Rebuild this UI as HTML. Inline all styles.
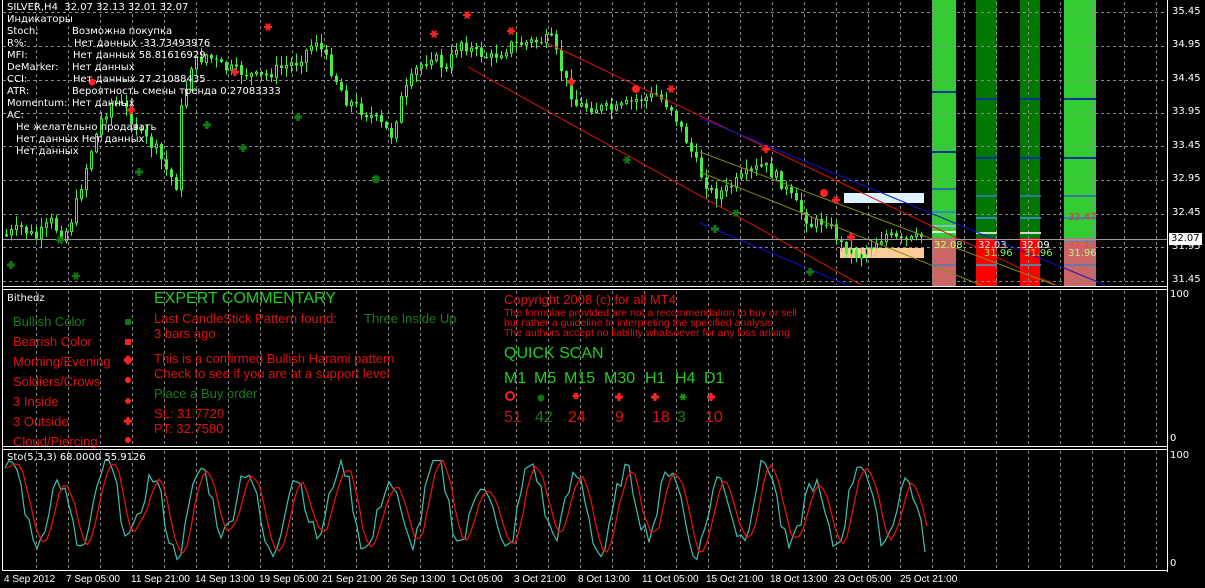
<!DOCTYPE html>
<html><head><meta charset="utf-8">
<style>
html,body{margin:0;padding:0;background:#000;}
body{width:1205px;height:588px;overflow:hidden;position:relative;font-family:"DejaVu Sans","Liberation Sans",sans-serif;}
svg{position:absolute;left:0;top:0;}
.t{position:absolute;white-space:nowrap;font-size:10px;color:#fff;line-height:12px;font-family:"DejaVu Sans","Liberation Sans",sans-serif;}
.x{position:absolute;white-space:nowrap;font-size:10px;color:#fff;line-height:12px;font-family:"Liberation Sans",sans-serif;}
.a{font-family:"Liberation Sans",sans-serif;white-space:nowrap;position:absolute;}
</style></head><body>
<svg id="s" width="1205" height="588" viewBox="0 0 1205 588" xmlns="http://www.w3.org/2000/svg"></svg>

<div class="t" style="left:7px;top:2px">SILVER,H4&nbsp; 32.07 32.13 32.01 32.07</div>
<div class="t" style="left:7px;top:14px">Индикаторы</div>
<div class="t" style="left:7px;top:26px">Stoch:</div><div class="t" style="left:72px;top:26px">Возможна покупка</div>
<div class="t" style="left:7px;top:38px">R%:</div><div class="t" style="left:74px;top:38px">Нет данных -33.73493976</div>
<div class="t" style="left:7px;top:50px">MFI:</div><div class="t" style="left:73px;top:50px">Нет данных 58.81616929</div>
<div class="t" style="left:7px;top:62px">DeMarker:</div><div class="t" style="left:72px;top:62px">Нет данных</div>
<div class="t" style="left:7px;top:74px">CCI:</div><div class="t" style="left:73px;top:74px">Нет данных 27.21088435</div>
<div class="t" style="left:7px;top:86px">ATR:</div><div class="t" style="left:72px;top:86px">Вероятность смены тренда 0.27083333</div>
<div class="t" style="left:7px;top:98px">Momentum:</div><div class="t" style="left:72px;top:98px">Нет данных</div>
<div class="t" style="left:7px;top:110px">AC:</div>
<div class="t" style="left:16px;top:122px">Не желательно продавать</div>
<div class="t" style="left:16px;top:134px">Нет данных Нет данных</div>
<div class="t" style="left:16px;top:146px">Нет данных</div>

<div class="t" style="left:7px;top:293px">Bithedz</div>
<div class="a" style="left:13px;top:314px;font-size:13px;color:#1e7a1e">Bullish Color</div>
<div class="a" style="left:13px;top:334px;font-size:13px;color:#e01010">Bearish Color</div>
<div class="a" style="left:13px;top:354px;font-size:13px;color:#e01010">Morning/Evening</div>
<div class="a" style="left:13px;top:374px;font-size:13px;color:#e01010">Soldiers/Crows</div>
<div class="a" style="left:13px;top:394px;font-size:13px;color:#e01010">3 Inside</div>
<div class="a" style="left:13px;top:414px;font-size:13px;color:#e01010">3 Outside</div>
<div class="a" style="left:13px;top:434px;font-size:13px;color:#e01010">Cloud/Piercing</div>

<div class="a" style="left:154px;top:290px;font-size:16px;color:#22cc22">EXPERT COMMENTARY</div>
<div class="a" style="left:154px;top:311px;font-size:13px;color:#e01010">Last CandleStick Pattern found:</div>
<div class="a" style="left:364px;top:311px;font-size:13px;color:#1e7a1e">Three Inside Up</div>
<div class="a" style="left:154px;top:326px;font-size:13px;color:#e01010">3 bars ago</div>
<div class="a" style="left:154px;top:351px;font-size:13px;color:#e01010">This is a confirmed Bullish Harami pattern</div>
<div class="a" style="left:154px;top:366px;font-size:13px;color:#e01010">Check to see if you are at a support level</div>
<div class="a" style="left:154px;top:386px;font-size:13px;color:#1e7a1e">Place a Buy order</div>
<div class="a" style="left:154px;top:406px;font-size:13px;color:#e01010">SL: 31.7720</div>
<div class="a" style="left:154px;top:421px;font-size:13px;color:#e01010">PT: 32.7580</div>

<div class="a" style="left:504px;top:292px;font-size:13px;color:#e01010">Copyright 2008 (c) for all MT4</div>
<div class="a" style="left:504px;top:308px;font-size:10.5px;line-height:10px;color:#e01010">The formulae provided are not a recommendation to buy or sell<br>but rather a guideline to interpreting the specified analysis.<br>The authors accept no liability whatsoever for any loss arising</div>
<div class="a" style="left:504px;top:345px;font-size:16px;color:#22cc22">QUICK SCAN</div>
<div class="a" style="left:504px;top:370px;font-size:16px;color:#22cc22">M1</div>
<div class="a" style="left:534px;top:370px;font-size:16px;color:#22cc22">M5</div>
<div class="a" style="left:564px;top:370px;font-size:16px;color:#22cc22">M15</div>
<div class="a" style="left:604px;top:370px;font-size:16px;color:#22cc22">M30</div>
<div class="a" style="left:645px;top:370px;font-size:16px;color:#22cc22">H1</div>
<div class="a" style="left:675px;top:370px;font-size:16px;color:#22cc22">H4</div>
<div class="a" style="left:704px;top:370px;font-size:16px;color:#22cc22">D1</div>
<div class="a" style="left:504px;top:409px;font-size:16px;color:#b01818">51</div>
<div class="a" style="left:535px;top:409px;font-size:16px;color:#1e7a1e">42</div>
<div class="a" style="left:568px;top:409px;font-size:16px;color:#e01010">24</div>
<div class="a" style="left:615px;top:409px;font-size:16px;color:#e01010">9</div>
<div class="a" style="left:652px;top:409px;font-size:16px;color:#e01010">18</div>
<div class="a" style="left:677px;top:409px;font-size:16px;color:#1e7a1e">3</div>
<div class="a" style="left:705px;top:409px;font-size:16px;color:#e01010">10</div>

<div class="t" style="left:7px;top:452px">Sto(5,3,3) 68.0000 55.9126</div>

<div class="t" style="left:1172px;top:6px">35.45</div>
<div class="t" style="left:1172px;top:39px">34.95</div>
<div class="t" style="left:1172px;top:73px">34.45</div>
<div class="t" style="left:1172px;top:106px">33.95</div>
<div class="t" style="left:1172px;top:140px">33.45</div>
<div class="t" style="left:1172px;top:173px">32.95</div>
<div class="t" style="left:1172px;top:207px">32.45</div>
<div class="t" style="left:1172px;top:241px">31.95</div>
<div class="t" style="left:1172px;top:274px">31.45</div>
<div class="t" style="left:1169px;top:233px;background:#fff;color:#000;padding:0 2px">32.07</div>
<div class="t" style="left:1170px;top:289px">100</div>
<div class="t" style="left:1170px;top:433px">0</div>
<div class="t" style="left:1170px;top:450px">100</div>
<div class="t" style="left:1170px;top:558px">0</div>

<div class="x" style="left:4px;top:574px">4 Sep 2012</div>
<div class="x" style="left:66px;top:574px">7 Sep 05:00</div>
<div class="x" style="left:131px;top:574px">11 Sep 21:00</div>
<div class="x" style="left:195px;top:574px">14 Sep 13:00</div>
<div class="x" style="left:259px;top:574px">19 Sep 05:00</div>
<div class="x" style="left:322px;top:574px">21 Sep 21:00</div>
<div class="x" style="left:386px;top:574px">26 Sep 13:00</div>
<div class="x" style="left:451px;top:574px">1 Oct 05:00</div>
<div class="x" style="left:514px;top:574px">3 Oct 21:00</div>
<div class="x" style="left:578px;top:574px">8 Oct 13:00</div>
<div class="x" style="left:642px;top:574px">11 Oct 05:00</div>
<div class="x" style="left:706px;top:574px">15 Oct 21:00</div>
<div class="x" style="left:770px;top:574px">18 Oct 13:00</div>
<div class="x" style="left:834px;top:574px">23 Oct 05:00</div>
<div class="x" style="left:900px;top:574px">25 Oct 21:00</div>

<script>
(function(){
var s=document.getElementById('s');var h='<defs><clipPath id="cm"><rect x="3" y="0" width="1164" height="285"/></clipPath></defs>';
function L(x1,y1,x2,y2,c,w,d){h+='<line x1="'+x1+'" y1="'+y1+'" x2="'+x2+'" y2="'+y2+'" stroke="'+c+'" stroke-width="'+(w||1)+'"'+(d?' stroke-dasharray="'+d+'"':'')+'/>';}
function R(x,y,w,hh,c){h+='<rect x="'+x+'" y="'+y+'" width="'+w+'" height="'+hh+'" fill="'+c+'"/>';}
R(932,0,24,238,'#33cc33');R(932,238,24,49,'#cc6666');
R(976,0,21,238,'#007700');R(976,238,21,49,'#ff0000');
R(1020,0,20,238,'#007700');R(1020,238,20,49,'#ff0000');
R(1064,0,32,238,'#33cc33');R(1064,238,32,49,'#cc6666');
var gc='#8a8a8a';
for(var x=36;x<1167;x+=32){L(x+.5,2,x+.5,285,gc,1,'3,3');L(x+.5,291,x+.5,446,gc,1,'3,3');L(x+.5,451,x+.5,569,gc,1,'3,3');}
[12,46,80,113,146,180,214,247,281].forEach(function(y){L(3,y+.5,1167,y+.5,gc,1,'3,3');});
function bl(x,w,y,c){R(x,y,w,2,c);}
bl(932,24,91,'#003399');bl(932,24,151,'#003399');bl(932,24,188,'#3366aa');bl(932,24,211,'#3388bb');bl(932,24,225,'#88bbcc');bl(932,24,231,'#ddeedd');bl(932,24,264,'#6677aa');
[976,1020].forEach(function(x){bl(x,21,98,'#003399');bl(x,21,157,'#003399');bl(x,21,195,'#337799');bl(x,21,217,'#3388bb');bl(x,21,232,'#ccddcc');bl(x,21,264,'#6677aa');});
bl(1064,32,98,'#003399');bl(1064,32,157,'#003399');bl(1064,32,195,'#337799');bl(1064,32,217,'#3388bb');bl(1064,32,239,'#33aadd');bl(1064,32,264,'#6677aa');
R(844,193,80,10,'#ddf4ff');R(840,248,84,10,'#ffcc99');
var P=[[5,235],[20,228],[35,238],[50,222],[62,238],[72,215],[80,185],[90,150],[100,120],[112,100],[125,110],[140,135],[155,150],[165,170],[175,185],[180,110],[190,65],[205,55],[222,68],[240,72],[258,78],[275,70],[295,62],[315,40],[330,70],[345,100],[360,110],[375,120],[390,135],[400,100],[415,70],[430,55],[445,70],[458,40],[470,50],[490,58],[510,45],[530,42],[550,40],[562,75],[575,105],[595,108],[615,110],[635,100],[655,95],[670,108],[685,140],[700,175],[712,195],[725,190],[745,175],[762,165],[778,180],[795,205],[810,225],[825,220],[840,245],[855,255],[870,245],[885,235],[900,242],[912,240],[922,236]];
function py(x){for(var i=0;i<P.length-1;i++){if(x>=P[i][0]&&x<=P[i+1][0]){var t=(x-P[i][0])/(P[i+1][0]-P[i][0]);return P[i][1]+t*(P[i+1][1]-P[i][1]);}}return 236;}
var seed=7;function rnd(){seed=(seed*9301+49297)%233280;return seed/233280;}
var prev=py(5);
for(var x=5;x<=922;x+=5){var c=py(x)+(rnd()-.5)*12;var o=prev;var hi=Math.min(o,c)-rnd()*9-1,lo=Math.max(o,c)+rnd()*9+1;
var xx=Math.round(x);L(xx+1.5,hi,xx+1.5,lo,'#44ee44',1);
var top=Math.min(o,c),bh=Math.max(1,Math.abs(o-c));
if(c<o){h+='<rect x="'+(xx+.5)+'" y="'+top+'" width="2" height="'+bh+'" fill="#000" stroke="#44ee44" stroke-width="1"/>';}
else R(xx,top,3,bh,'#44ee44');
prev=c;}
h+='<g clip-path="url(#cm)">';
L(468,67,865,287,'#dd1111');L(547,43,1167,338,'#dd1111');
L(700,118,1110,287,'#1111cc');L(700,223,852,287,'#1111cc');
L(700,152,1167,327,'#888811');L(700,172,1167,360,'#888811');
h+='</g>';
L(3,239.5,1167,239.5,'#9a9a9a');
function star(x,y,c,r){for(var a=0;a<3;a++){var an=a*Math.PI/3;L(x-r*Math.cos(an),y-r*Math.sin(an),x+r*Math.cos(an),y+r*Math.sin(an),c,2);}}
function cross(x,y,c){R(x-4,y-1.5,8,3,c);R(x-1.5,y-4,3,8,c);h+='<circle cx="'+x+'" cy="'+y+'" r="2.5" fill="'+c+'"/>';}
function dot(x,y,c,r){h+='<circle cx="'+x+'" cy="'+y+'" r="'+r+'" fill="'+c+'"/>';}
star(268,27,'#ff2222',4);star(467,15,'#ff2222',4);star(511,31,'#ff2222',4);star(434,34,'#ff2222',4);star(671,89,'#ff2222',4);star(836,200,'#ff2222',4);
cross(235,72,'#ff2222');cross(131,110,'#ff2222');cross(571,82,'#ff2222');cross(766,149,'#ff2222');cross(851,237,'#ff2222');
dot(92,82,'#ff2222',3.5);dot(636,89,'#ff2222',4);dot(824,193,'#ff2222',4);
cross(11,265,'#117711');cross(139,172,'#117711');cross(243,148,'#117711');cross(207,125,'#117711');cross(298,117,'#117711');cross(715,229,'#117711');cross(810,272,'#117711');
star(60,240,'#117711',4);star(76,276,'#117711',4);star(627,160,'#117711',4);star(736,213,'#117711',4);
dot(376,179,'#117711',4);
L(2.5,0,2.5,570,'#fff');L(1167.5,0,1167.5,572,'#fff');
L(2,286.5,1168,286.5,'#fff');L(2,289.5,1168,289.5,'#fff');
L(2,446.5,1168,446.5,'#fff');L(2,449.5,1168,449.5,'#fff');L(2,570.5,1168,570.5,'#fff');
h+='<circle cx="510" cy="396" r="4" fill="none" stroke="#ff2222" stroke-width="2"/>';
dot(541,398,'#117711',3.5);star(576,396,'#ff2222',3.5);cross(619,397,'#ff2222');cross(655,397,'#ff2222');star(683,397,'#119911',3.5);cross(711,397,'#ff2222');
R(125,319,6,6,'#117711');R(125,339,6,6,'#ff2222');
h+='<polygon points="128,355 133,360 128,365 123,360" fill="#ff2222"/>';
dot(128,380,'#ff2222',3);star(128,401,'#ff2222',3);cross(128,421,'#ff2222');dot(128,440,'#ff2222',3);
var k=[],d=[];
for(var x=5;x<=925;x+=4){var v=52+33*Math.sin(x/7.5)+10*Math.sin(x/17+1)+(rnd()-.5)*18;v=Math.max(5,Math.min(95,v));k.push([x,v]);}
for(var i=0;i<k.length;i++){var a=k[Math.max(0,i-1)][1],b=k[Math.max(0,i-2)][1];d.push([k[i][0]+2,(k[i][1]+a+b)/3]);}
function pl(arr,c){var p=arr.map(function(q){return q[0]+','+(565-q[1]*1.1).toFixed(1);}).join(' ');h+='<polyline points="'+p+'" fill="none" stroke="'+c+'" stroke-width="1.2"/>';}
pl(k,'#40c0b0');pl(d,'#ee1111');
s.innerHTML=h;
})();
</script>
<div class="t" style="left:934px;top:240px;color:#ccff66">32.08</div>
<div class="t" style="left:978px;top:240px;color:#ffdddd">32.03</div>
<div class="t" style="left:984px;top:248px;color:#88ee66">31.96</div>
<div class="t" style="left:1021px;top:240px;color:#ffffff">32.09</div>
<div class="t" style="left:1024px;top:248px;color:#88ee66">31.96</div>
<div class="t" style="left:1068px;top:212px;color:#dd3333">32.47</div>
<div class="t" style="left:1068px;top:240px;color:#ee4444">32.13</div>
<div class="t" style="left:1068px;top:248px;color:#bbee88">31.96</div>
</body></html>
